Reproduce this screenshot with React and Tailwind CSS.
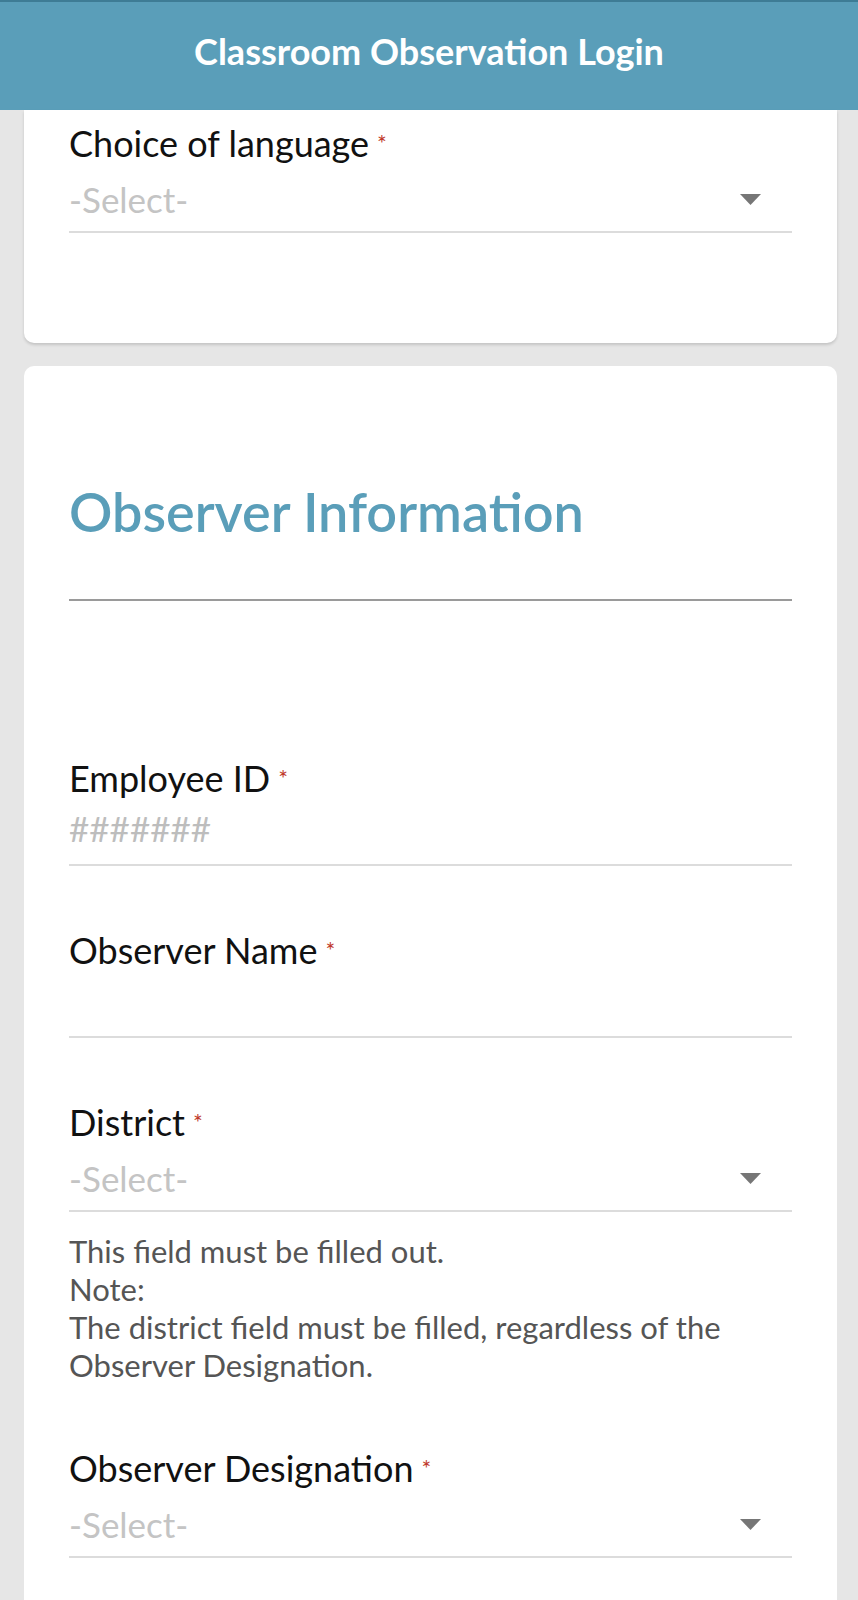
import React from 'react'

function Caret() {
  return (
    <svg width="21" height="11" viewBox="0 0 21 11" className="mr-[31px] shrink-0">
      <path d="M0 0 H21 L10.5 11 Z" fill="#767676" />
    </svg>
  )
}

function Label({ children }) {
  return (
    <div className="text-[36px] leading-[40px] text-[#111]">
      {children}
      <span className="relative top-[-5px] ml-[8px] text-[23px] leading-[24px] text-[#c0392b]">*</span>
    </div>
  )
}

function SelectField({ label }) {
  return (
    <div>
      <Label>{label}</Label>
      <div className="flex h-[70px] items-center justify-between border-b-2 border-[#dcdcdc] pt-[4px]">
        <span className="text-[35px] text-[#c4c4c4]">-Select-</span>
        <Caret />
      </div>
    </div>
  )
}

function TextField({ label, placeholder }) {
  return (
    <div>
      <Label>{label}</Label>
      <div className="flex h-[68px] items-center border-b-2 border-[#dcdcdc] pb-[6px]">
        <span className="text-[35px] text-[#bdbdbd]">{placeholder}</span>
      </div>
    </div>
  )
}

export default function App() {
  return (
    <div className="min-h-screen bg-[#e6e6e6]" style={{ fontFamily: "Lato, 'Open Sans', sans-serif" }}>
      <header className="flex h-[110px] items-center justify-center border-t-2 border-[#3e7c95] bg-[#5a9eb9] pb-[10px]">
        <h1 className="text-[36px] font-bold text-white">Classroom Observation Login</h1>
      </header>

      <main className="ml-6 mr-[21px] pb-10">
        {/* language picker, top part scrolled under the bar */}
        <div className="rounded-b-[10px] bg-white px-[45px] pt-[13px] pb-[110px] shadow-[0_2px_3px_rgba(0,0,0,0.15)]">
          <SelectField label="Choice of language" />
        </div>

        <div className="mt-[23px] rounded-[10px] bg-white px-[45px] pt-[116px] pb-24">
          <h2 className="border-b-2 border-[#9a9a9a] pb-[57px] text-[54px] font-semibold leading-[60px] text-[#5a9eb9]">
            Observer Information
          </h2>

          <div className="mt-[157px] flex flex-col gap-16">
            <TextField label="Employee ID" placeholder="#######" />
            <TextField label="Observer Name" placeholder="" />
            <div>
              <SelectField label="District" />
              <div className="mt-[20px] text-[31px] leading-[38px] text-[#555]">
                <p>This field must be filled out.</p>
                <p>Note:</p>
                <p>The district field must be filled, regardless of the Observer Designation.</p>
              </div>
            </div>
            <SelectField label="Observer Designation" />
          </div>
        </div>
      </main>
    </div>
  )
}
